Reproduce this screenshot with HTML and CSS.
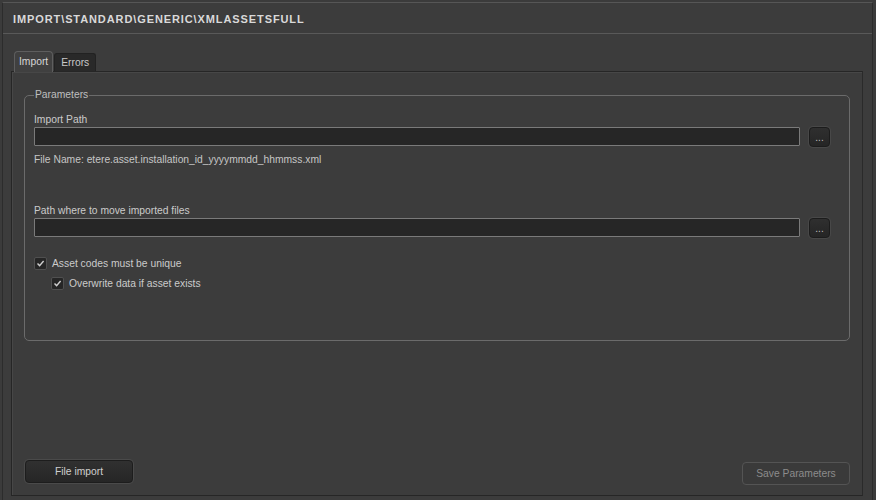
FILE: index.html
```html
<!DOCTYPE html>
<html>
<head>
<meta charset="utf-8">
<link rel="stylesheet" href="styles.css">
</head>
<body>
<div class="window">
  <div class="header">IMPORT\STANDARD\GENERIC\XMLASSETSFULL</div>
  <div class="content">
    <div class="tabs">
      <div class="tab active">Import</div>
      <div class="tab">Errors</div>
    </div>
    <div class="pane">
      <fieldset class="group">
        <legend>Parameters</legend>
        <div class="field-label">Import Path</div>
        <div class="path-row">
          <div class="input"></div>
          <div class="browse">...</div>
        </div>
        <div class="info">File Name: etere.asset.installation_id_yyyymmdd_hhmmss.xml</div>
        <div class="field-label second">Path where to move imported files</div>
        <div class="path-row">
          <div class="input"></div>
          <div class="browse">...</div>
        </div>
        <div class="check-row">
          <span class="box"><svg width="9" height="9" viewBox="0 0 9 9"><path d="M1.5 4.5 L3.6 6.6 L7.6 2" fill="none" stroke="#cfcfcf" stroke-width="1.4"/></svg></span>
          <span>Asset codes must be unique</span>
        </div>
        <div class="check-row sub">
          <span class="box"><svg width="9" height="9" viewBox="0 0 9 9"><path d="M1.5 4.5 L3.6 6.6 L7.6 2" fill="none" stroke="#cfcfcf" stroke-width="1.4"/></svg></span>
          <span>Overwrite data if asset exists</span>
        </div>
      </fieldset>
      <div class="footer">
        <div class="btn primary">File import</div>
        <div class="btn disabled">Save Parameters</div>
      </div>
    </div>
  </div>
</div>
</body>
</html>
```

FILE: styles.css
```css
html, body {
  margin: 0;
  padding: 0;
  width: 876px;
  height: 500px;
  background: #3b3b3b;
  overflow: hidden;
  font-family: "Liberation Sans", Arial, sans-serif;
  font-size: 10.3px;
  color: #cdcdcd;
}

.window {
  box-sizing: border-box;
  margin: 2px 3px 0 2px;
  height: 498px;
  border-top: 1px solid #565656;
  border-left: 1px solid #2c2c2c;
  border-right: 1px solid #2c2c2c;
  display: flex;
  flex-direction: column;
  background: #3c3c3c;
}

.header {
  height: 31px;
  box-sizing: border-box;
  border-bottom: 1px solid #595959;
  padding: 9px 0 0 10px;
  font-weight: bold;
  font-size: 11px;
  letter-spacing: 0.9px;
  color: #d9d9d9;
  line-height: 14px;
}

.content {
  flex: 1;
  display: flex;
  flex-direction: column;
  padding: 17px 9px 4px 8px;
}

.tabs {
  display: flex;
  align-items: flex-end;
  height: 20px;
  padding-left: 3px;
  gap: 1px;
}

.tab {
  box-sizing: border-box;
  height: 18px;
  padding: 0 6px;
  line-height: 17px;
  background: #292929;
  border: 1px solid #222;
  border-bottom: none;
  border-radius: 3px 3px 0 0;
  color: #c8c8c8;
}

.tab.active {
  height: 21px;
  background: #404040;
  border: 1px solid #5e5e5e;
  border-bottom: none;
  border-radius: 4px 4px 0 0;
  line-height: 19px;
  padding: 0 4px;
  color: #d6d6d6;
  margin-bottom: -1px;
  position: relative;
  z-index: 1;
}

.pane {
  flex: 1;
  display: flex;
  flex-direction: column;
  border: 1px solid #262626;
  border-right-color: #2a2a2a;
  box-shadow: inset 1px 1px 0 #474747;
  padding: 0 12px 10px 13px;
}

.group {
  margin: 17px 0 0 -1px;
  padding: 0 19px 0 9px;
  height: 252px;
  box-sizing: border-box;
  border: 1px solid #6b6b6b;
  border-radius: 5px;
  min-width: 0;
}

.group legend {
  padding: 0 1px;
  margin-left: 0;
  color: #bfbfbf;
  line-height: 12px;
}

.field-label {
  line-height: 13px;
  margin-top: 12px;
  color: #cbcbcb;
}

.field-label.second {
  margin-top: 38px;
}

.path-row {
  display: flex;
  align-items: flex-start;
  gap: 9px;
  margin-top: 1px;
}

.input {
  flex: 1;
  height: 19px;
  box-sizing: border-box;
  background: #262626;
  border: 1px solid #7a7a7a;
  border-radius: 1px;
}

.browse {
  width: 21px;
  height: 20px;
  box-sizing: border-box;
  background: linear-gradient(#2f2f2f, #252525);
  border: 1px solid #1c1c1c;
  box-shadow: 0 0 0 1px #484848;
  border-radius: 4px;
  color: #c0c0c0;
  font-size: 10px;
  text-align: center;
  line-height: 20px;
  letter-spacing: 0;
}

.info {
  margin-top: 6px;
  line-height: 13px;
  color: #c6c6c6;
}

.check-row {
  display: flex;
  align-items: center;
  gap: 5px;
  margin-top: 18px;
  height: 14px;
  color: #cbcbcb;
}

.check-row.sub {
  margin-top: 6px;
  padding-left: 17px;
}

.box {
  width: 13px;
  height: 13px;
  box-sizing: border-box;
  background: #262626;
  border: 1px solid #505050;
  border-radius: 2px;
  display: flex;
  align-items: center;
  justify-content: center;
}

.footer {
  margin-top: auto;
  display: flex;
  justify-content: space-between;
  align-items: flex-start;
}

.btn {
  width: 108px;
  height: 23px;
  box-sizing: border-box;
  border-radius: 4px;
  text-align: center;
  line-height: 21px;
}

.btn.primary {
  background: linear-gradient(#303030, #262626);
  border: 1px solid #1d1d1d;
  box-shadow: 0 0 0 1px #4a4a4a;
  color: #cfcfcf;
}

.btn.disabled {
  margin-top: 2px;
  margin-bottom: 0;
  background: #3a3a3a;
  border: 1px solid #545454;
  color: #8c8c8c;
}
```
